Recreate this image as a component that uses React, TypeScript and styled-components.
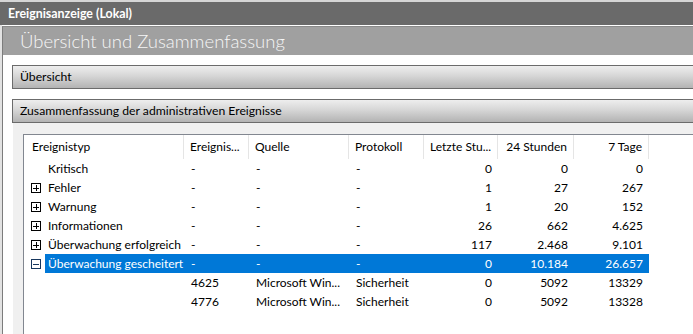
import React from 'react';
import styled, {createGlobalStyle} from 'styled-components';

const GlobalStyle = createGlobalStyle`
  html, body { margin: 0; padding: 0; background: #fff; }
  body {
    font-family: Lato, "Liberation Sans", "DejaVu Sans", sans-serif;
    font-size: 12px;
    color: #000;
  }
  #root { width: 693px; height: 334px; overflow: hidden; }
`;

const Window = styled.div`
  display: flex;
  flex-direction: column;
  height: 334px;
`;

const TitleBar = styled.div`
  height: 23px;
  border-top: 2px solid #d6d6d6;
  background: #6a6a6a;
  color: #fff;
  font-weight: bold;
  font-size: 12.4px;
  padding-left: 8px;
  display: flex;
  align-items: center;
  white-space: nowrap;
`;

const Frame = styled.div`
  flex: 1;
  display: flex;
  border-left: 2px solid #e2e2e2;
  padding-top: 1px;
  min-height: 0;
`;

const Inner = styled.div`
  flex: 1;
  display: flex;
  flex-direction: column;
  border-left: 1px solid #7c7c7c;
  border-top: 1px solid #8a8a8a;
  min-width: 0;
`;

const Heading = styled.div`
  height: 28px;
  line-height: 28px;
  background: #a0a0a0;
  color: #f6f6f6;
  font-size: 18.5px;
  font-weight: 300;
  padding-left: 17px;
  white-space: nowrap;
`;

const Content = styled.div`
  flex: 1;
  display: flex;
  flex-direction: column;
  padding: 10px 0 0 9px;
  gap: 10px;
  min-height: 0;
`;

const Section = styled.div<{$grow?: boolean}>`
  display: flex;
  flex-direction: column;
  flex: ${p => (p.$grow ? 1 : '0 0 auto')};
  min-height: 0;
`;

const Panel = styled.div`
  height: 22px;
  line-height: 22px;
  border: 1px solid #6b6b6b;
  border-right: none;
  background: linear-gradient(#eeeeee, #d6d6d6 45%, #b3b3b3);
  padding-left: 7px;
  font-size: 12.2px;
  white-space: nowrap;
`;

const Lower = styled.div`
  flex: 1;
  display: flex;
  background: #f0f0f0;
  margin-left: 1px;
  padding: 11px 0 0 10px;
  min-height: 0;
`;

const Table = styled.div`
  flex: 1;
  background: #fff;
  border-left: 1px solid #828790;
  border-top: 1px solid #828790;
  min-width: 0;
`;

const HeaderRow = styled.div`
  display: grid;
  grid-template-columns: 160px 65px 100px 75px 74px 76px 75px;
  height: 24px;
`;

const HeaderCell = styled.div<{$right?: boolean; $first?: boolean}>`
  border-right: 1px solid #e5e5e5;
  line-height: 24px;
  padding: ${p => (p.$first ? '0 6px 0 8px' : '0 6px')};
  text-align: ${p => (p.$right ? 'right' : 'left')};
  white-space: nowrap;
  overflow: hidden;
`;

const Row = styled.div`
  display: flex;
  height: 19px;
`;

const Lead = styled.div`
  width: 21px;
  padding-left: 7px;
  box-sizing: border-box;
  display: flex;
  align-items: center;
  flex: 0 0 auto;
`;

const Body = styled.div<{$selected?: boolean}>`
  display: grid;
  grid-template-columns: 139px 65px 100px 75px 74px 76px 75px;
  background: ${p => (p.$selected ? '#0078d7' : 'transparent')};
  color: ${p => (p.$selected ? '#fff' : '#000')};
  line-height: 19px;
`;

const Cell = styled.div<{$right?: boolean}>`
  padding: 0 6px 0 7px;
  text-align: ${p => (p.$right ? 'right' : 'left')};
  white-space: nowrap;
  overflow: hidden;
`;

const Label = styled.div`
  padding-left: 3px;
  white-space: nowrap;
  overflow: hidden;
`;

function Expander({open, selected}: {open: boolean; selected?: boolean}) {
  const c = selected ? '#17375e' : '#000';
  return (
    <svg width="10" height="10" viewBox="0 0 10 10" shapeRendering="crispEdges">
      <rect x="0.5" y="0.5" width="9" height="9" fill="#fff" stroke={c} />
      <line x1="2" y1="5" x2="8" y2="5" stroke={c} />
      {!open && <line x1="5" y1="2" x2="5" y2="8" stroke={c} />}
    </svg>
  );
}

type EventRow = {
  label: string;
  id: string;
  source: string;
  log: string;
  hour: string;
  day: string;
  week: string;
  expander?: 'plus' | 'minus';
  selected?: boolean;
};

const rows: EventRow[] = [
  {label: 'Kritisch', id: '-', source: '-', log: '-', hour: '0', day: '0', week: '0'},
  {label: 'Fehler', id: '-', source: '-', log: '-', hour: '1', day: '27', week: '267', expander: 'plus'},
  {label: 'Warnung', id: '-', source: '-', log: '-', hour: '1', day: '20', week: '152', expander: 'plus'},
  {label: 'Informationen', id: '-', source: '-', log: '-', hour: '26', day: '662', week: '4.625', expander: 'plus'},
  {label: 'Überwachung erfolgreich', id: '-', source: '-', log: '-', hour: '117', day: '2.468', week: '9.101', expander: 'plus'},
  {label: 'Überwachung gescheitert', id: '-', source: '-', log: '-', hour: '0', day: '10.184', week: '26.657', expander: 'minus', selected: true},
  {label: '', id: '4625', source: 'Microsoft Win...', log: 'Sicherheit', hour: '0', day: '5092', week: '13329'},
  {label: '', id: '4776', source: 'Microsoft Win...', log: 'Sicherheit', hour: '0', day: '5092', week: '13328'},
];

export default function App() {
  return (
    <Window>
      <GlobalStyle />
      <TitleBar>Ereignisanzeige (Lokal)</TitleBar>
      <Frame>
        <Inner>
          <Heading>Übersicht und Zusammenfassung</Heading>
          <Content>
            <Section>
              <Panel>Übersicht</Panel>
            </Section>
            <Section $grow>
              <Panel>Zusammenfassung der administrativen Ereignisse</Panel>
              <Lower>
                <Table>
                  <HeaderRow>
                    <HeaderCell $first>Ereignistyp</HeaderCell>
                    <HeaderCell>Ereignis...</HeaderCell>
                    <HeaderCell>Quelle</HeaderCell>
                    <HeaderCell>Protokoll</HeaderCell>
                    <HeaderCell $right>Letzte Stu...</HeaderCell>
                    <HeaderCell $right>24 Stunden</HeaderCell>
                    <HeaderCell $right>7 Tage</HeaderCell>
                  </HeaderRow>
                  {rows.map((r, i) => (
                    <Row key={i}>
                      <Lead>
                        {r.expander && <Expander open={r.expander === 'minus'} selected={r.selected} />}
                      </Lead>
                      <Body $selected={r.selected}>
                        <Label>{r.label}</Label>
                        <Cell>{r.id}</Cell>
                        <Cell>{r.source}</Cell>
                        <Cell>{r.log}</Cell>
                        <Cell $right>{r.hour}</Cell>
                        <Cell $right>{r.day}</Cell>
                        <Cell $right>{r.week}</Cell>
                      </Body>
                    </Row>
                  ))}
                </Table>
              </Lower>
            </Section>
          </Content>
        </Inner>
      </Frame>
    </Window>
  );
}
